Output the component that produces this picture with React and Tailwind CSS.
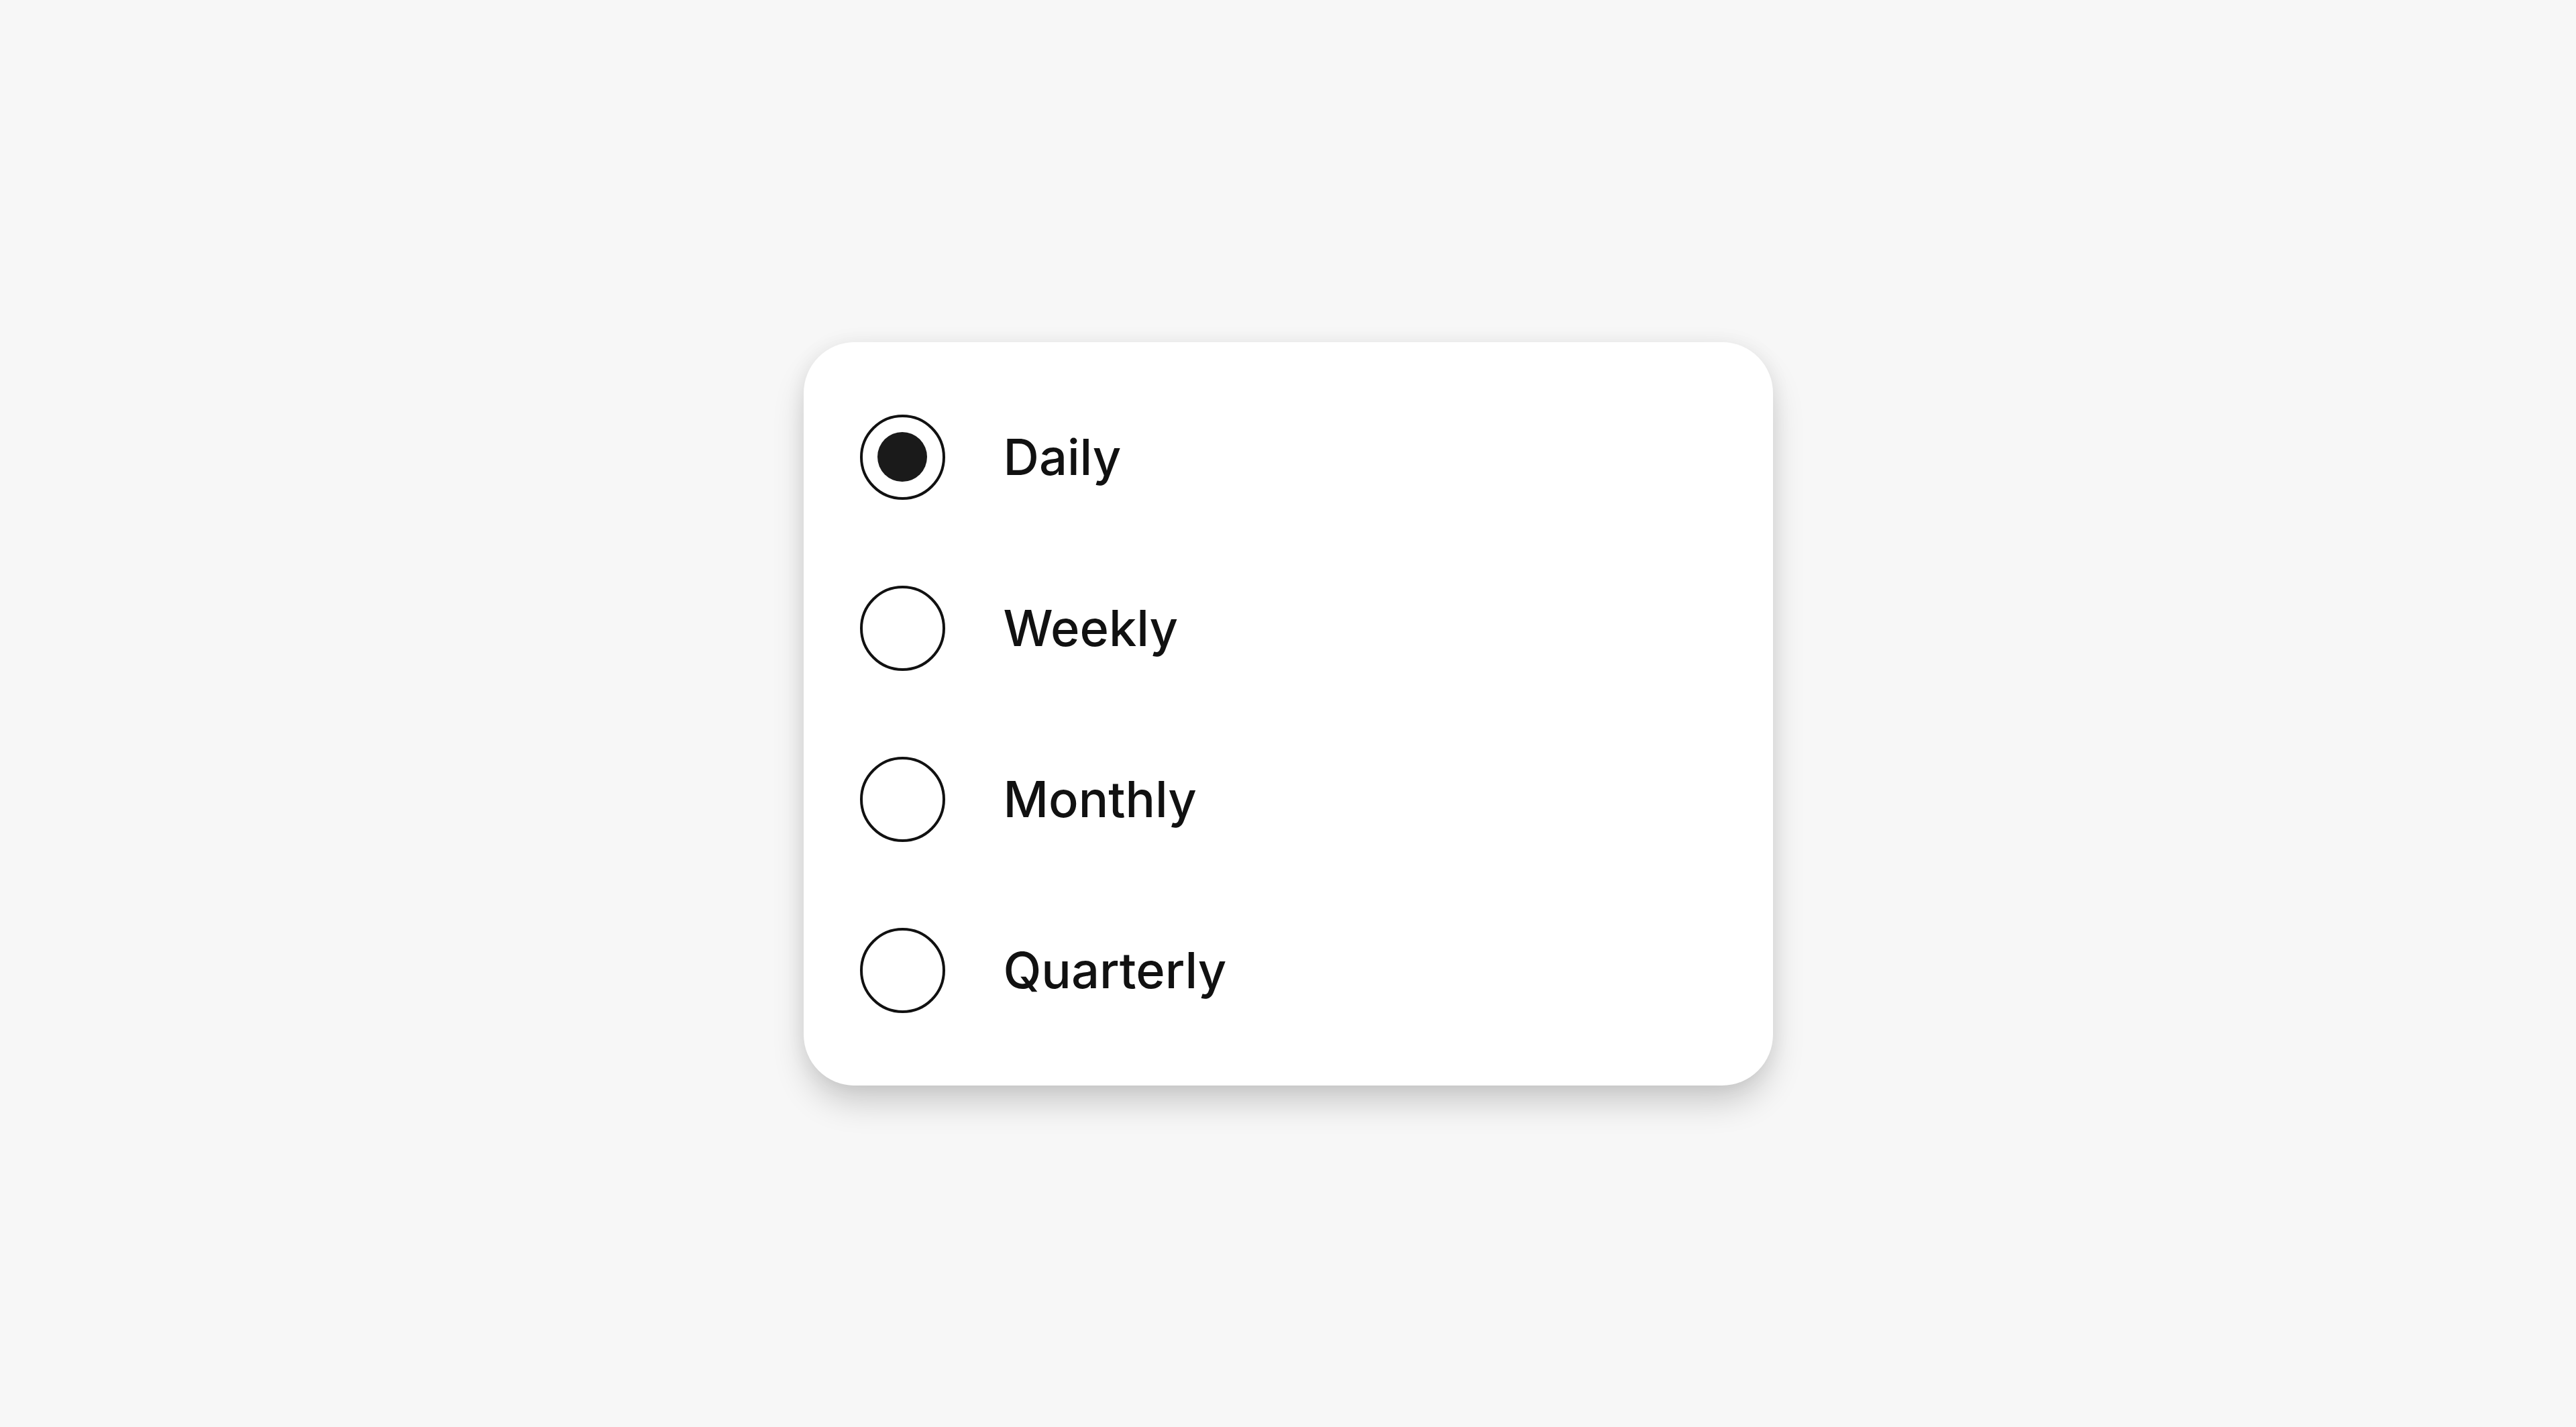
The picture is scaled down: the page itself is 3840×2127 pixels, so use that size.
import React, { useState } from "react";

const OPTIONS = ["Daily", "Weekly", "Monthly", "Quarterly"];

function Radio({ checked }) {
  return (
    <span className="flex size-[127px] shrink-0 items-center justify-center rounded-full border-[4px] border-[#111111] bg-white">
      {checked && <span className="size-[74px] rounded-full bg-[#1a1a1a]" />}
    </span>
  );
}

export default function App() {
  const [value, setValue] = useState("Daily");

  return (
    <div className="flex min-h-screen items-center justify-center bg-[#f7f7f7]" style={{ fontFamily: "Inter, 'Noto Sans', sans-serif" }}>
      <div
        role="radiogroup"
        className="flex w-[1445px] flex-col gap-[128px] rounded-[76px] bg-white px-[84px] py-[108px] shadow-[0_28px_52px_-6px_rgba(0,0,0,0.2),0_0_30px_rgba(0,0,0,0.06)]"
      >
        {OPTIONS.map(opt => (
          <button
            key={opt}
            role="radio"
            aria-checked={value === opt}
            onClick={() => setValue(opt)}
            className="flex items-center gap-[87px] text-left outline-none"
          >
            <Radio checked={value === opt} />
            <span className="text-[74px] leading-none font-medium text-[#111111]">{opt}</span>
          </button>
        ))}
      </div>
    </div>
  );
}
